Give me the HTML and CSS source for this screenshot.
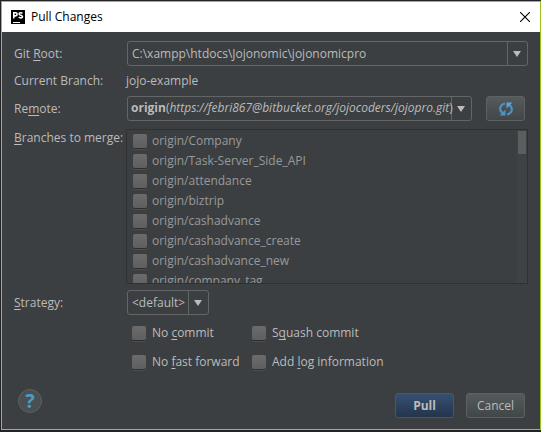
FILE: index.html
```html
<!DOCTYPE html>
<html lang="en">
<head>
<meta charset="utf-8">
<title>Pull Changes</title>
<link rel="stylesheet" href="styles.css">
</head>
<body>
<main class="dialog">
  <header class="titlebar">
    <svg class="logo" viewBox="0 0 14 14" aria-hidden="true">
      <rect width="14" height="14" fill="#000"/>
      <path d="M2.800 8.500V2.700h1.700a1.400 1.400 0 0 1 0 3.200H2.800M11.500 3.300C10 2.300 8 2.600 8.100 4c.1 1.400 3.400.9 3.400 2.600 0 1.500-2.300 1.600-3.800.6" fill="none" stroke="#fff" stroke-width="1.600"/>
      <rect x="2" y="12" width="7" height="1" fill="#fff"/>
    </svg>
    <h1 class="title">Pull Changes</h1>
    <button class="close" type="button" aria-label="Close">
      <svg viewBox="0 0 10 10" aria-hidden="true"><path d="M0 0l10 10M10 0L0 10" stroke="#000" stroke-width="1.100"/></svg>
    </button>
  </header>

  <form class="content">
    <div class="row">
      <label class="label" for="root">Git <u>R</u>oot:</label>
      <div class="combo grow">
        <select id="root"><option>C:\xampp\htdocs\Jojonomic\jojonomicpro</option></select>
      </div>
    </div>
    <div class="row text-row">
      <span class="label">Current Branch:</span>
      <span>jojo-example</span>
    </div>
    <div class="row">
      <label class="label" for="remote">Re<u>m</u>ote:</label>
      <div class="combo grow">
        <select id="remote"><option value="origin" aria-label="origin"></option></select>
        <span class="combo-value"><b>origin</b>(<i>https://febri867@bitbucket.org/jojocoders/jojopro.git</i>)</span>
      </div>
      <button class="button refresh" type="button" aria-label="Refresh">
        <svg viewBox="0 0 14 14" aria-hidden="true">
          <path d="M6 1.500C2 2 .2 6 1.800 9L4 11.500" fill="none" stroke="#4a93c4" stroke-width="2.200"/>
          <path d="M.5 13.500H6.500V7.500z" fill="#4a93c4"/>
          <path d="M8 12.500C12 12 13.800 8 12.200 5L10 2.500" fill="none" stroke="#4a93c4" stroke-width="2.200"/>
          <path d="M13.500.5H7.500v6z" fill="#5ba5d3"/>
        </svg>
      </button>
    </div>
    <div class="row branches">
      <span class="label" id="branches-label"><u>B</u>ranches to merge:</span>
      <div class="list-box" role="group" aria-labelledby="branches-label">
        <div class="list">
          <label class="check"><input type="checkbox">origin/Company</label>
          <label class="check"><input type="checkbox">origin/Task-Server_Side_API</label>
          <label class="check"><input type="checkbox">origin/attendance</label>
          <label class="check"><input type="checkbox">origin/biztrip</label>
          <label class="check"><input type="checkbox">origin/cashadvance</label>
          <label class="check"><input type="checkbox">origin/cashadvance_create</label>
          <label class="check"><input type="checkbox">origin/cashadvance_new</label>
          <label class="check"><input type="checkbox">origin/company_tag</label>
        </div>
        <div class="track"><div class="thumb"></div></div>
      </div>
    </div>
    <div class="row strategy">
      <label class="label" for="strategy"><u>S</u>trategy:</label>
      <div class="combo">
        <select id="strategy"><option>&lt;default&gt;</option></select>
      </div>
    </div>
    <div class="options">
      <label class="check"><input type="checkbox"><span>No <u>c</u>ommit</span></label>
      <label class="check"><input type="checkbox"><span>S<u>q</u>uash commit</span></label>
      <label class="check"><input type="checkbox"><span>No <u>f</u>ast forward</span></label>
      <label class="check"><input type="checkbox"><span>Add <u>l</u>og information</span></label>
    </div>
    <footer class="footer">
      <button class="help" type="button" aria-label="Help">?</button>
      <button class="button primary" type="submit">Pull</button>
      <button class="button" type="button">Cancel</button>
    </footer>
  </form>
</main>
</body>
</html>
```
FILE: styles.css
```css
* {
  box-sizing: border-box;
}

body {
  margin: 0;
  padding: 1px 0 2px 1px;
  background: #242426;
  color: #bbbbbb;
  font: 12px/16px "Open Sans", "Noto Sans", sans-serif;
}

button,
select {
  color: inherit;
  font: inherit;
}

u {
  text-underline-offset: 2px;
  text-decoration-skip-ink: none;
}

.dialog {
  border: 1px solid #98c61a;
  background: #3c3f41;
}

.titlebar {
  display: flex;
  align-items: center;
  height: 30px;
  padding: 0 10px 0 9px;
  background: #fff;
  color: #000;
}

.logo {
  width: 14px;
  height: 14px;
}

.title {
  flex: 1;
  margin: 0 0 0 6px;
  font-size: 12px;
  font-weight: 400;
}

.close {
  display: flex;
  padding: 0;
  border: 0;
  background: none;
}

.close svg {
  width: 10px;
  height: 10px;
}

.content {
  padding: 9px 12px 11px;
}

.row {
  display: flex;
  align-items: center;
}

.text-row {
  height: 30px;
}

.label {
  flex: none;
  width: 112px;
}

.text-row .label,
.branches .label {
  white-space: nowrap;
}

.combo {
  position: relative;
  margin-left: 1px;
}

.grow {
  flex: 1;
  min-width: 0;
}

.combo select {
  display: block;
  width: 100%;
  height: 25px;
  padding: 0 22px 0 4px;
  border: 1px solid #646566;
  border-radius: 3px;
  background: none;
  appearance: none;
}

.combo::after {
  content: "";
  position: absolute;
  top: 10px;
  right: 7px;
  width: 8px;
  height: 6px;
  background: #bbbbbb;
  clip-path: polygon(0 0, 100% 0, 50% 100%);
  pointer-events: none;
}

.combo::before {
  content: "";
  position: absolute;
  top: 0;
  right: 20px;
  width: 1px;
  height: 25px;
  background: #646566;
  pointer-events: none;
}

.combo-value {
  position: absolute;
  top: 4px;
  left: 4px;
  white-space: nowrap;
  pointer-events: none;
}

.button {
  height: 25px;
  padding: 0;
  width: 59px;
  border: 1px solid #5e6162;
  border-radius: 3px;
  background: linear-gradient(#555a5c, #414648);
}

.refresh {
  display: flex;
  align-items: center;
  justify-content: center;
  width: 39px;
  margin: 0 3px 0 14px;
}

.refresh svg {
  width: 14px;
  height: 14px;
}

.branches {
  align-items: flex-start;
  margin-top: 8px;
}

.branches .label {
  padding-top: 1px;
}

.list-box {
  position: relative;
  flex: 1;
  height: 155px;
  border: 1px solid #2f3132;
  overflow: hidden;
}

.list {
  padding: 1px 6px;
  color: #999999;
}

.track {
  position: absolute;
  top: 0;
  right: 0;
  bottom: 0;
  width: 10px;
  padding: 1px;
  background: #3f4244;
}

.thumb {
  height: 15%;
  background: #5b5e5f;
}

.check {
  display: flex;
  align-items: center;
  gap: 6px;
  height: 20px;
  white-space: nowrap;
}

.list .check {
  gap: 5px;
}

.check input {
  flex: none;
  width: 14px;
  height: 14px;
  margin: 0;
  border-radius: 2px;
  background: linear-gradient(#6b6b6b, #5f5f5f);
  box-shadow: 0 1px 0 #2c2e2f, 0 2px 0 #4c4f50;
  appearance: none;
}

.strategy {
  margin-top: 6px;
}

.options {
  display: grid;
  grid-template-columns: 120px 1fr;
  row-gap: 9px;
  padding: 8px 0 0 118px;
}

.footer {
  display: flex;
  align-items: flex-end;
  gap: 12px;
  margin-top: 17px;
  padding-right: 3px;
}

.help {
  width: 24px;
  height: 24px;
  margin: 0 auto 5px 4px;
  padding: 0;
  border: 1px solid #5e6162;
  border-radius: 50%;
  background: #4a4f51;
  color: #4a9bc9;
  font-size: 20px;
  font-weight: 700;
  line-height: 22px;
}

.primary {
  border-color: #4c5660;
  background: linear-gradient(#365072, #24344b);
  font-weight: 700;
}
```
